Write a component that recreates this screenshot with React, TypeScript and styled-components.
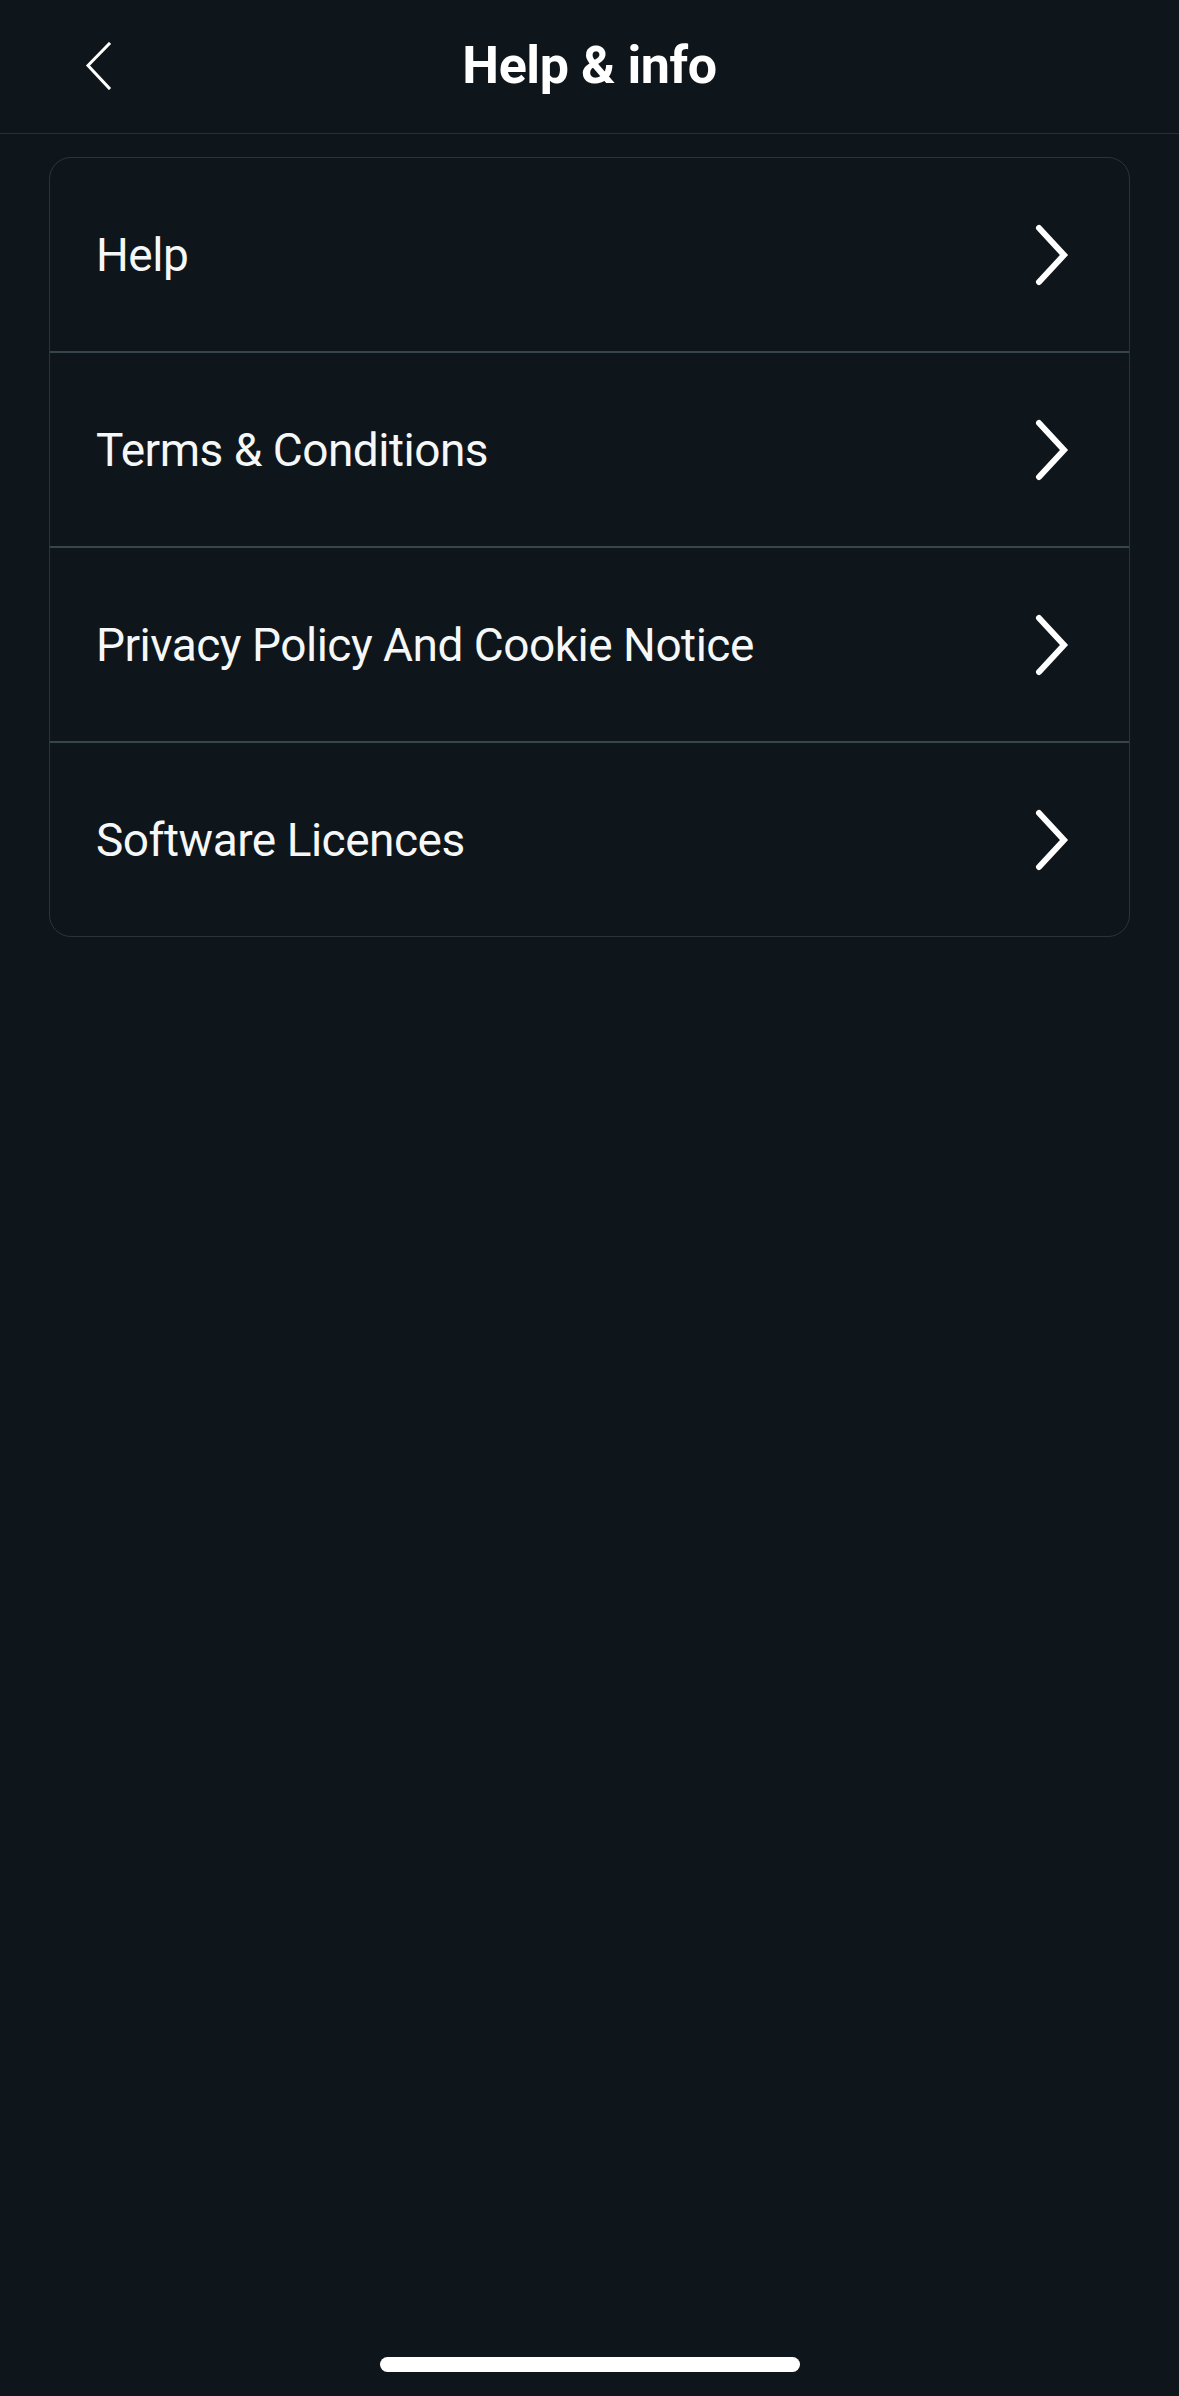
import styled, { createGlobalStyle } from "styled-components";

const GlobalStyle = createGlobalStyle`
  html, body {
    margin: 0;
    padding: 0;
    background-color: #0e161b;
  }
  * {
    box-sizing: border-box;
  }
`;

const Screen = styled.div`
  width: 1179px;
  min-height: 2396px;
  background-color: #0e161b;
  color: #fff;
  font-family: Roboto, "Liberation Sans", sans-serif;
  display: flex;
  flex-direction: column;
`;

const Header = styled.header`
  height: 134px;
  border-bottom: 1px solid #263136;
  display: grid;
  grid-template-columns: 160px 1fr 160px;
  align-items: center;
  padding-bottom: 2px;
`;

const BackButton = styled.button`
  background: none;
  border: none;
  padding: 0 0 0 84px;
  height: 60px;
  display: flex;
  align-items: center;
  cursor: pointer;
`;

const Title = styled.h1`
  margin: 0;
  text-align: center;
  font-size: 52px;
  font-weight: 700;
  letter-spacing: -0.4px;
  color: #fff;
`;

const Card = styled.ul`
  list-style: none;
  margin: 23px 49px 0;
  padding: 0;
  border: 1.5px solid #2a353b;
  border-radius: 22px;
  overflow: hidden;
`;

const Row = styled.li<{ $last?: boolean }>`
  height: ${({ $last }) => ($last ? "193px" : "195px")};
  display: flex;
  align-items: center;
  justify-content: space-between;
  padding: 0 57px 0 46px;
  border-bottom: ${({ $last }) => ($last ? "none" : "2px solid #37454c")};
  cursor: pointer;
`;

const Label = styled.span`
  font-size: 46px;
  font-weight: 400;
  letter-spacing: -0.5px;
  color: #f5f7f8;
`;

const Spacer = styled.div`
  flex: 1;
`;

const HomeBar = styled.div`
  width: 420px;
  height: 15px;
  border-radius: 8px;
  background-color: #fff;
  align-self: center;
  margin-bottom: 24px;
`;

const BackIcon = () => (
  <svg width="28" height="48" viewBox="0 0 28 48" fill="none">
    <path d="M25 2 L4 23.5 L25 46" stroke="#fff" strokeWidth="3" strokeLinecap="square" />
  </svg>
);

const ChevronIcon = () => (
  <svg width="40" height="62" viewBox="0 0 40 62" fill="none">
    <path
      d="M7 4 L32 31 L7 58"
      stroke="#fff"
      strokeWidth="6"
      strokeLinecap="round"
      strokeLinejoin="miter"
    />
  </svg>
);

const items = [
  "Help",
  "Terms & Conditions",
  "Privacy Policy And Cookie Notice",
  "Software Licences",
];

const App = () => {
  return (
    <>
      <GlobalStyle />
      <Screen>
        <Header>
          <BackButton aria-label="Back">
            <BackIcon />
          </BackButton>
          <Title>Help &amp; info</Title>
          <div />
        </Header>
        <Card>
          {items.map((item, i) => (
            <Row key={item} $last={i === items.length - 1}>
              <Label>{item}</Label>
              <ChevronIcon />
            </Row>
          ))}
        </Card>
        <Spacer />
        <HomeBar />
      </Screen>
    </>
  );
};

export default App;
